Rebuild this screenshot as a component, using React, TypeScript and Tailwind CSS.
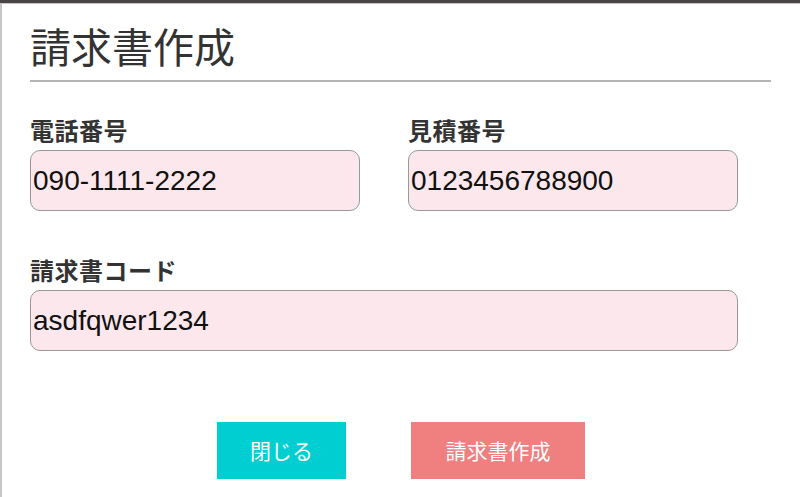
import React from "react";

const jp = { fontFamily: '"Noto Sans CJK JP", "Noto Sans", sans-serif' };
const latin = { fontFamily: '"Liberation Sans", Arial, "Noto Sans CJK JP", sans-serif' };

function Field({ label, value }: { label: string; value: string }) {
  return (
    <div className="flex flex-col">
      <div className="text-[24px] leading-[28px] font-bold text-[#333333] tracking-[0.5px]" style={jp}>
        {label}
      </div>
      <div className="mt-[6px] h-[61px] rounded-[10px] border border-[#999999] bg-[#fce8ec] flex items-center pl-[2px]">
        <span className="text-[28px] leading-none text-[#111111]" style={latin}>
          {value}
        </span>
      </div>
    </div>
  );
}

export default function App() {
  return (
    <div className="w-[800px] h-[497px] overflow-hidden flex flex-col bg-[#454141]">
      <div className="h-[3px] bg-[#4a4545]" />
      <div className="flex-1 bg-white border-t border-l-2 border-[#c6c6c6] flex flex-col pl-[28px] pr-[29px]">
        <h1 className="mt-[17px] text-[41px] leading-[48px] font-normal text-[#333333]" style={jp}>
          請求書作成
        </h1>
        <div className="mt-[11px] h-[2px] bg-[#b4b4b4]" />
        <div className="mt-[34px] w-[708px] grid grid-cols-2 gap-x-[48px]">
          <Field label="電話番号" value="090-1111-2222" />
          <Field label="見積番号" value="0123456788900" />
        </div>
        <div className="mt-[45px] w-[708px]">
          <Field label="請求書コード" value="asdfqwer1234" />
        </div>
        <div className="mt-[71px] flex justify-center gap-[65px] -ml-[28px] -mr-[29px]">
          <button
            className="w-[129px] h-[57px] bg-[#00ced1] text-white text-[21px] flex items-center justify-center"
            style={jp}
          >
            閉じる
          </button>
          <button
            className="w-[174px] h-[57px] bg-[#f08080] text-white text-[21px] flex items-center justify-center"
            style={jp}
          >
            請求書作成
          </button>
        </div>
      </div>
    </div>
  );
}
